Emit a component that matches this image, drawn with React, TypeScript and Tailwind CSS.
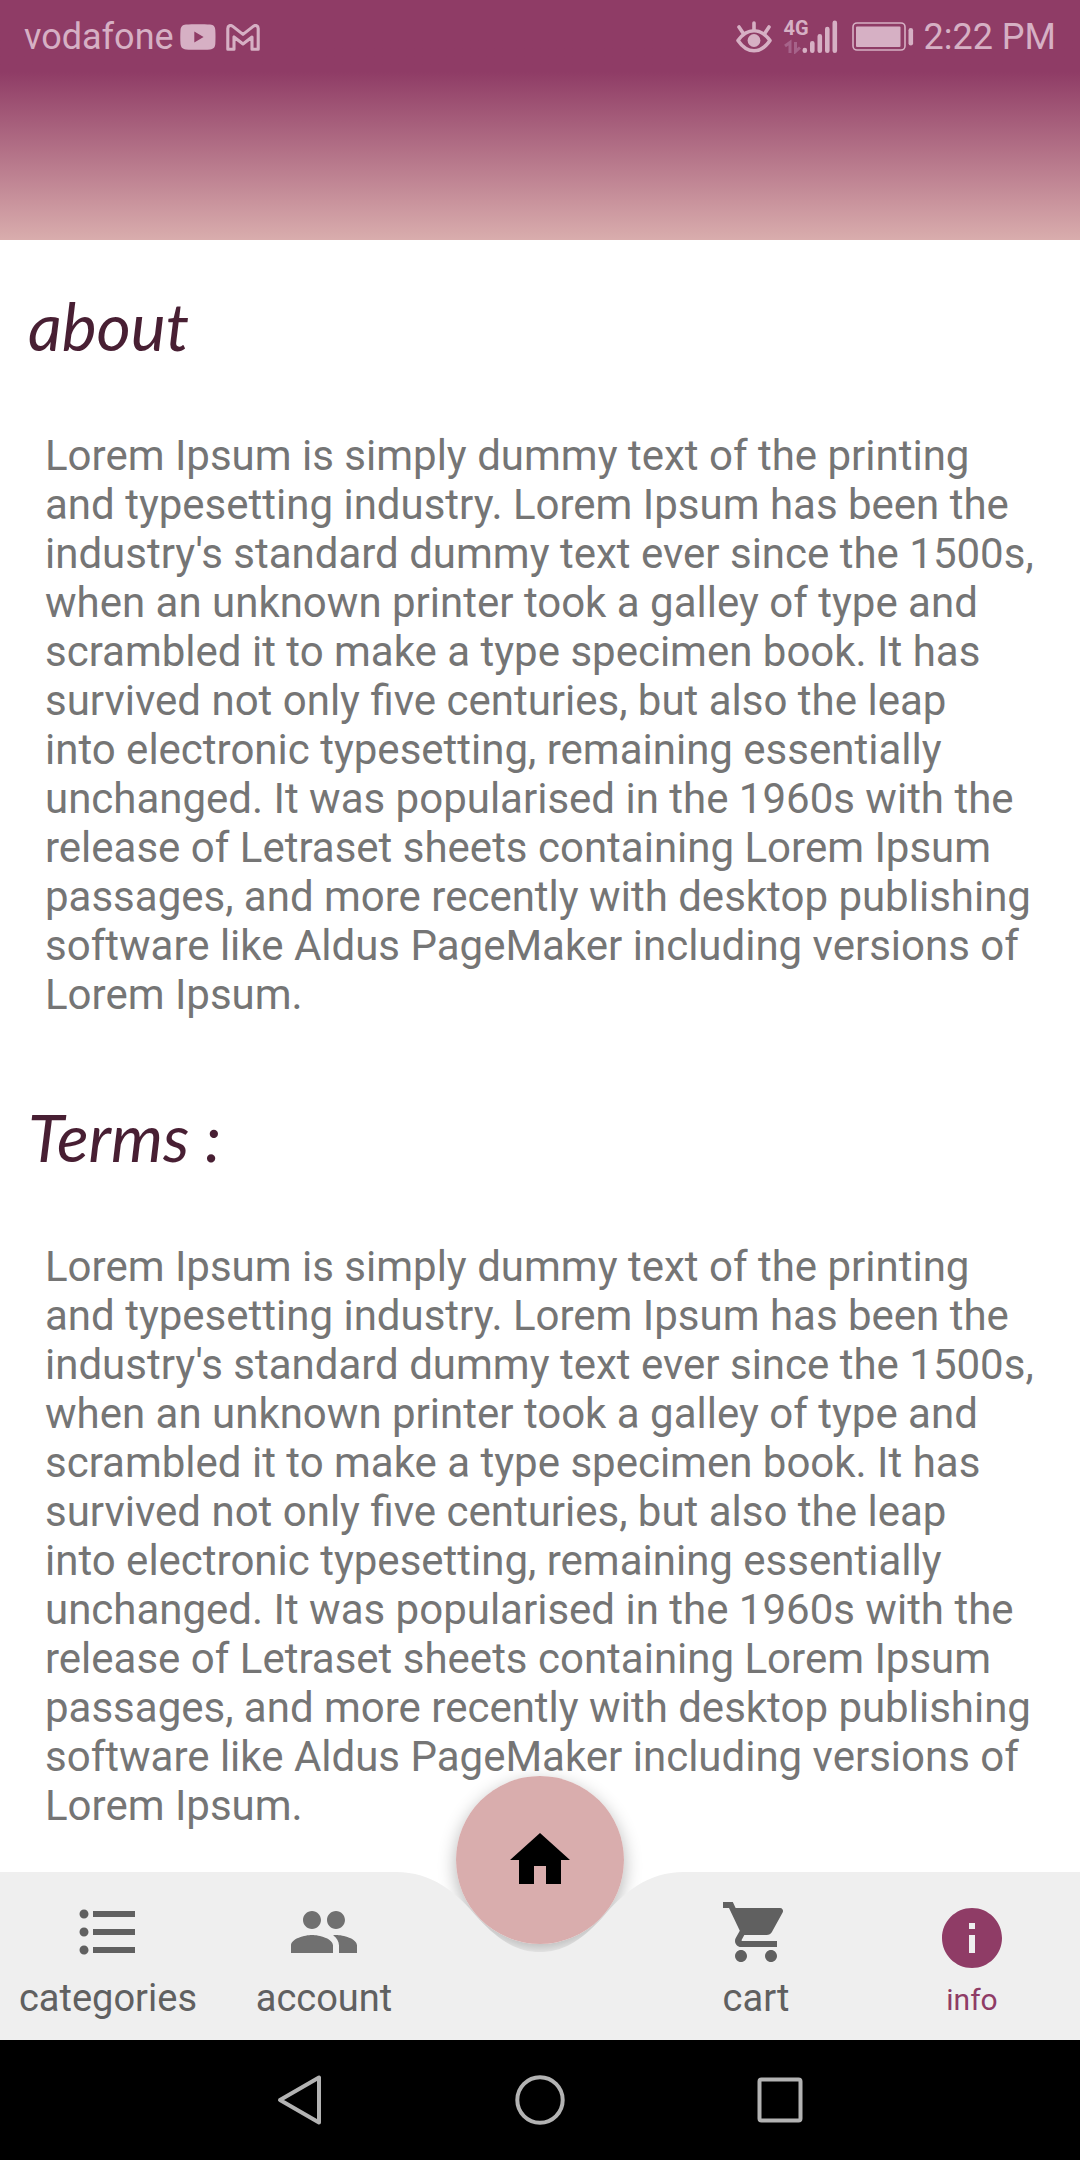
import React from "react";
import {
  MdFormatListBulleted,
  MdHome,
  MdInfo,
  MdPeople,
  MdShoppingCart,
} from "react-icons/md";

const LOREM =
  "Lorem Ipsum is simply dummy text of the printing and typesetting industry. Lorem Ipsum has been the industry's standard dummy text ever since the 1500s, when an unknown printer took a galley of type and scrambled it to make a type specimen book. It has survived not only five centuries, but also the leap into\u00a0electronic typesetting, remaining essentially unchanged. It was popularised in the 1960s with the release of Letraset sheets containing Lorem Ipsum passages, and more recently with desktop publishing software like Aldus PageMaker including versions of Lorem Ipsum.";

function YoutubeIcon() {
  return (
    <svg width="36" height="26" viewBox="0 0 36 26" aria-hidden="true">
      <path
        fillRule="evenodd"
        fill="currentColor"
        d="M6 .6C12 0 24 0 30 .6C34 1 35 3 35.3 6C35.6 10 35.6 16 35.3 20C35 23 34 25 30 25.4C24 26 12 26 6 25.4C2 25 1 23 .5 20C.2 16 .2 10 .5 6C1 3 2 1 6 .6ZM14.3 7.6V18.4L23.6 13Z"
      />
    </svg>
  );
}

function GmailIcon() {
  return (
    <svg width="34" height="27" viewBox="0 0 34 27" aria-hidden="true">
      <path
        fill="none"
        stroke="currentColor"
        strokeWidth="3.1"
        strokeLinejoin="round"
        d="M1.8 25.2V4.6C1.8 1.6 4.6 .6 6.8 2.4L17 10.4L27.2 2.4C29.4 .6 32.2 1.6 32.2 4.6V25.2H26V13L17 20L8 13V25.2Z"
      />
    </svg>
  );
}

function EyeIcon() {
  return (
    <svg width="36" height="32" viewBox="0 0 36 32" aria-hidden="true">
      <g fill="none" stroke="currentColor" strokeWidth="3.6" strokeLinecap="round" strokeLinejoin="round">
        <path d="M2 19.5Q9 9.8 18 9.8T34 19.5Q27 29.8 18 29.8T2 19.5Z" />
        <path d="M18 2V9M3 6L7 12M33 6L29 12" />
      </g>
      <circle cx="18" cy="19.5" r="6.4" fill="currentColor" />
    </svg>
  );
}

function SignalIcon() {
  return (
    <span className="relative block">
      <svg width="54" height="34" viewBox="0 0 54 34" aria-hidden="true">
        <g stroke="currentColor" strokeWidth="4.6" strokeLinecap="round">
          <path d="M20.8 30V30.8M28.3 23.2V30.8M35.8 16.2V30.8M43.3 9V30.8M50.8 2.8V30.8" />
        </g>
        <g fill="none" stroke="#a6638a" strokeWidth="3">
          <path d="M1 26L6 22.5V33M11.5 22V31.5L16 27.5" />
        </g>
      </svg>
      <span className="absolute -top-0.5 left-0 text-[20px] leading-5 font-bold">4G</span>
    </span>
  );
}

function BatteryIcon() {
  return (
    <svg width="62" height="30" viewBox="0 0 62 30" aria-hidden="true">
      <rect x="1" y="1" width="52" height="27" rx="4" fill="none" stroke="currentColor" strokeWidth="1.6" />
      <rect x="4" y="4.5" width="44.5" height="20.5" rx="1" fill="currentColor" />
      <rect x="56.5" y="6" width="4.6" height="17.5" rx="2.3" fill="currentColor" />
    </svg>
  );
}

function StatusBar() {
  return (
    <div className="flex h-[74px] items-center justify-between px-6 text-[36px] leading-[42px] text-[#d6b0c4]">
      <div className="flex items-center">
        <span>vodafone</span>
        <span className="ml-1.5">
          <YoutubeIcon />
        </span>
        <span className="ml-2.5">
          <GmailIcon />
        </span>
      </div>
      <div className="flex items-center">
        <EyeIcon />
        <span className="ml-3">
          <SignalIcon />
        </span>
        <span className="ml-3.5">
          <BatteryIcon />
        </span>
        <span className="ml-2.5">2:22 PM</span>
      </div>
    </div>
  );
}

function Section({ title, children }: { title: string; children: React.ReactNode }) {
  return (
    <section className="pt-11">
      <h2 className="px-7 font-['Lato','Noto_Sans',sans-serif] text-[66px] leading-[84px] text-[#481f33] italic">
        {title}
      </h2>
      <p className="px-[45px] pt-[63px] pb-8 text-[42px] leading-[49px] text-[#757575]">{children}</p>
    </section>
  );
}

function NavItem({
  icon,
  label,
  active = false,
}: {
  icon: React.ReactNode;
  label: string;
  active?: boolean;
}) {
  return (
    <button
      type="button"
      aria-current={active ? "page" : undefined}
      className={
        active
          ? "flex flex-col items-center pt-[30px] text-[30px] text-[#8f3c66]"
          : "flex flex-col items-center pt-6 text-[38px] text-[#606060]"
      }
    >
      {icon}
      <span className={active ? "pt-2 leading-[36px]" : "pt-[9px] leading-[42px]"}>{label}</span>
    </button>
  );
}

function BottomBar() {
  return (
    <nav className="sticky bottom-[120px] h-[168px]" aria-label="Main">
      <div className="absolute -top-24 left-1/2 size-[168px] -translate-x-1/2 rounded-full shadow-[0_6px_18px_rgba(0,0,0,0.3)]" />
      <div className="absolute inset-0 flex">
        <div className="flex-1 bg-[#efefef]" />
        <svg width="288" height="168" viewBox="0 0 288 168" aria-hidden="true">
          <path
            fill="#efefef"
            d="M0 0C36 0 60 20 82 46C104 70 122 80 144 80C166 80 184 70 206 46C228 20 252 0 288 0V168H0Z"
          />
        </svg>
        <div className="flex-1 bg-[#efefef]" />
      </div>
      <div className="relative grid h-full grid-cols-5">
        <NavItem icon={<MdFormatListBulleted size={72} />} label="categories" />
        <NavItem icon={<MdPeople size={72} color="#707070" />} label="account" />
        <span />
        <NavItem icon={<MdShoppingCart size={72} />} label="cart" />
        <NavItem icon={<MdInfo size={72} />} label="info" active />
      </div>
      <button
        type="button"
        aria-label="home"
        className="absolute -top-24 left-1/2 flex size-[168px] -translate-x-1/2 items-center justify-center rounded-full bg-[#d9adad] text-black"
      >
        <MdHome size={72} />
      </button>
    </nav>
  );
}

function SystemBar() {
  return (
    <div className="sticky bottom-0 flex h-[120px] items-center justify-center gap-[180px] bg-black text-[#b3b3b3]">
      <button type="button" aria-label="Back">
        <svg width="60" height="60" viewBox="0 0 60 60" fill="none" stroke="currentColor" strokeWidth="4" strokeLinejoin="round">
          <path d="M49 7.5V52.5L10 30Z" />
        </svg>
      </button>
      <button type="button" aria-label="Home screen">
        <svg width="60" height="60" viewBox="0 0 60 60" fill="none" stroke="currentColor" strokeWidth="4">
          <circle cx="30" cy="30" r="22.7" />
        </svg>
      </button>
      <button type="button" aria-label="Recent apps">
        <svg width="60" height="60" viewBox="0 0 60 60" fill="none" stroke="currentColor" strokeWidth="4">
          <rect x="9.5" y="9.5" width="41" height="41" rx="2" />
        </svg>
      </button>
    </div>
  );
}

export default function App() {
  return (
    <div className="flex min-h-screen flex-col bg-white font-['Roboto',sans-serif]">
      <header className="h-60 bg-linear-to-b from-[#8f3c66] from-30% to-[#d9adad]">
        <StatusBar />
      </header>
      <main className="-mb-1 flex-1">
        <Section title="about">{LOREM}</Section>
        <Section title="Terms :">{LOREM}</Section>
      </main>
      <BottomBar />
      <SystemBar />
    </div>
  );
}
